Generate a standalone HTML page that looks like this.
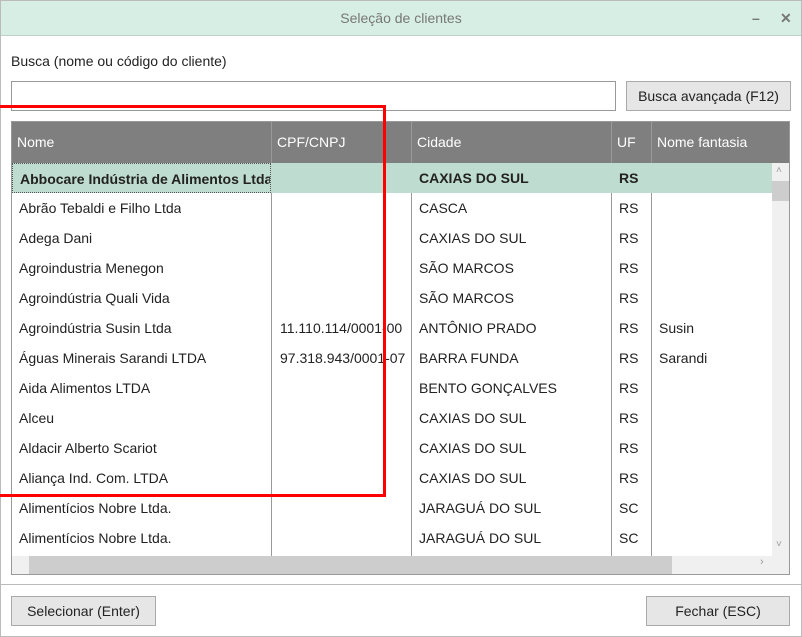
<!DOCTYPE html>
<html><head><meta charset="utf-8"><style>
*{box-sizing:border-box;margin:0;padding:0}
body{width:802px;height:637px;background:#fff;font-family:"Liberation Sans",sans-serif;font-size:14px;color:#222;position:relative;overflow:hidden}
.win{position:absolute;left:0;top:0;width:802px;height:637px;border:1px solid #bbb}
.title{position:absolute;left:1px;top:1px;width:800px;height:35px;background:#d7eee4;border-bottom:1px solid #c4cfca;text-align:center;line-height:34px;color:#777;font-size:14px}
.ab{position:absolute;top:1px;line-height:34px;color:#777;font-weight:bold;font-size:14px}
.lbl{position:absolute;left:11px;top:53px;font-size:14px;color:#222}
.inp{position:absolute;left:11px;top:81px;width:605px;height:30px;border:1px solid #999;background:#fff}
.btn{position:absolute;height:30px;border:1px solid #aaa;background:#e6e6e6;text-align:center;line-height:28px;font-size:14px;color:#222}
.grid{position:absolute;left:11px;top:121px;width:779px;height:454px;border:1px solid #999;overflow:hidden}
.hdr{position:absolute;left:0;top:0;width:777px;height:41px;background:#7f7f7f}
.hc{position:absolute;top:0;height:41px;line-height:41px;color:#fff;padding-left:5px;border-left:1px solid #999;font-size:14px}
.row{position:absolute;left:0;width:760px;height:30px;line-height:30px}
.row span{position:absolute;top:0;padding-left:7px;white-space:nowrap;overflow:hidden;height:30px}
.vl{position:absolute;top:41px;width:1px;height:394px;background:#999}
.sel{background:#bfdcd0;font-weight:bold}
.vs{position:absolute;left:760px;top:41px;width:17px;height:394px;background:#f0f0f0}
.hs{position:absolute;left:0;top:434px;width:777px;height:18px;background:#f0f0f0}
.red{position:absolute;left:-5px;top:105px;width:391px;height:392px;border:3px solid #f00}
</style></head><body>
<div class="win"></div>
<div class="title">Seleção de clientes</div>
<div class="ab" style="left:752px">–</div><div class="ab" style="left:780px">✕</div>
<div class="lbl">Busca (nome ou código do cliente)</div>
<div class="inp"></div>
<div class="btn" style="left:626px;top:81px;width:165px">Busca avançada (F12)</div>
<div class="grid">
<div class="hdr">
<div class="hc" style="left:0;border-left:none">Nome</div>
<div class="hc" style="left:259px">CPF/CNPJ</div>
<div class="hc" style="left:399px">Cidade</div>
<div class="hc" style="left:599px">UF</div>
<div class="hc" style="left:639px">Nome fantasia</div>
</div>
<div class="vl" style="left:259px"></div><div class="vl" style="left:399px"></div><div class="vl" style="left:599px"></div><div class="vl" style="left:639px"></div>
<div class="row sel" style="top:41px"><span style="left:0;width:259px;border:1px dotted #555">Abbocare Indústria de Alimentos Ltda</span><span style="left:400px">CAXIAS DO SUL</span><span style="left:600px">RS</span></div>
<div class="row" style="top:71px"><span style="left:0">Abrão Tebaldi e Filho Ltda</span><span style="left:400px">CASCA</span><span style="left:600px">RS</span></div>
<div class="row" style="top:101px"><span style="left:0">Adega Dani</span><span style="left:400px">CAXIAS DO SUL</span><span style="left:600px">RS</span></div>
<div class="row" style="top:131px"><span style="left:0">Agroindustria Menegon</span><span style="left:400px">SÃO MARCOS</span><span style="left:600px">RS</span></div>
<div class="row" style="top:161px"><span style="left:0">Agroindústria Quali Vida</span><span style="left:400px">SÃO MARCOS</span><span style="left:600px">RS</span></div>
<div class="row" style="top:191px"><span style="left:0">Agroindústria Susin Ltda</span><span style="left:261px;width:132px">11.110.114/0001-00</span><span style="left:400px">ANTÔNIO PRADO</span><span style="left:600px">RS</span><span style="left:640px">Susin</span></div>
<div class="row" style="top:221px"><span style="left:0">Águas Minerais Sarandi LTDA</span><span style="left:261px;width:132px">97.318.943/0001-07</span><span style="left:400px">BARRA FUNDA</span><span style="left:600px">RS</span><span style="left:640px">Sarandi</span></div>
<div class="row" style="top:251px"><span style="left:0">Aida Alimentos LTDA</span><span style="left:400px">BENTO GONÇALVES</span><span style="left:600px">RS</span></div>
<div class="row" style="top:281px"><span style="left:0">Alceu</span><span style="left:400px">CAXIAS DO SUL</span><span style="left:600px">RS</span></div>
<div class="row" style="top:311px"><span style="left:0">Aldacir Alberto Scariot</span><span style="left:400px">CAXIAS DO SUL</span><span style="left:600px">RS</span></div>
<div class="row" style="top:341px"><span style="left:0">Aliança Ind. Com. LTDA</span><span style="left:400px">CAXIAS DO SUL</span><span style="left:600px">RS</span></div>
<div class="row" style="top:371px"><span style="left:0">Alimentícios Nobre Ltda.</span><span style="left:400px">JARAGUÁ DO SUL</span><span style="left:600px">SC</span></div>
<div class="row" style="top:401px"><span style="left:0">Alimentícios Nobre Ltda.</span><span style="left:400px">JARAGUÁ DO SUL</span><span style="left:600px">SC</span></div>
<div class="vs"><div style="position:absolute;left:0;top:18px;width:17px;height:20px;background:#cdcdcd"></div><div style="position:absolute;top:2px;left:4px;font-size:10px;color:#999">˄</div><div style="position:absolute;top:376px;left:4px;font-size:10px;color:#999">˅</div></div>
<div class="hs"><div style="position:absolute;left:17px;top:0;width:643px;height:18px;background:#cdcdcd"></div><div style="position:absolute;left:748px;top:0;font-size:11px;color:#999">›</div></div>
</div>
<div style="position:absolute;left:1px;top:584px;width:800px;height:1px;background:#bbb"></div>
<div class="btn" style="left:11px;top:596px;width:145px">Selecionar (Enter)</div>
<div class="btn" style="left:646px;top:596px;width:144px">Fechar (ESC)</div>
<div class="red"></div>
</body></html>
